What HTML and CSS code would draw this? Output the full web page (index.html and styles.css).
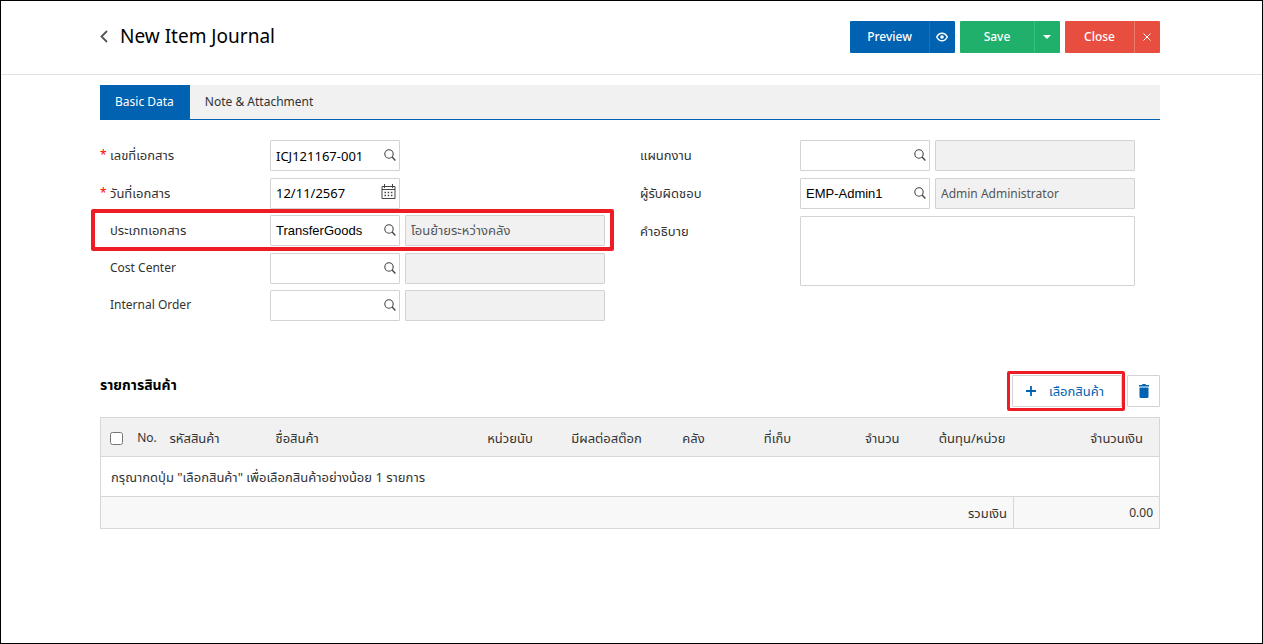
FILE: index.html
```html
<!DOCTYPE html>
<html lang="th">
<head>
<meta charset="utf-8">
<title>New Item Journal</title>
<meta name="viewport" content="width=device-width, initial-scale=1">
<link rel="stylesheet" href="styles.css">
</head>
<body>
<svg class="defs" aria-hidden="true">
  <symbol id="search" viewBox="0 0 12 12"><circle cx="5" cy="5" r="4.2" fill="none" stroke="currentColor" stroke-width="1.1"/><path d="M8.1 8.1 11.4 11.4" stroke="currentColor" stroke-width="1.4"/></symbol>
</svg>
<div class="page">
  <header class="header">
    <a class="back" href="#" aria-label="Back"><svg width="8" height="13" viewBox="0 0 8 13"><path d="M7 1 1.5 6.5 7 12" fill="none" stroke="currentColor" stroke-width="1.8"/></svg></a>
    <h1 class="title">New Item Journal</h1>
    <div class="actions">
      <div class="split split-blue">
        <button class="split-main" type="button">Preview</button>
        <button class="split-side" type="button" aria-label="Preview options"><svg width="12" height="10" viewBox="0 0 12 10"><path d="M.7 5C2 2.4 3.8 1.2 6 1.2S10 2.4 11.3 5C10 7.6 8.2 8.8 6 8.8S2 7.6 .7 5Z" fill="none" stroke="currentColor" stroke-width="1.4"/><circle cx="6" cy="5" r="1.8" fill="currentColor"/></svg></button>
      </div>
      <div class="split split-green">
        <button class="split-main" type="button">Save</button>
        <button class="split-side" type="button" aria-label="Save options"><svg width="8" height="4" viewBox="0 0 8 4"><path d="M0 0H8L4 4Z" fill="currentColor"/></svg></button>
      </div>
      <div class="split split-red">
        <button class="split-main" type="button">Close</button>
        <button class="split-side" type="button" aria-label="Close page"><svg width="8" height="8" viewBox="0 0 8 8"><path d="M.5.5 7.5 7.5M7.5.5.5 7.5" stroke="currentColor" stroke-width="1"/></svg></button>
      </div>
    </div>
  </header>
  <main class="main">
    <nav class="tabs">
      <a class="tab tab-active" href="#">Basic Data</a>
      <a class="tab" href="#">Note &amp; Attachment</a>
    </nav>
    <form class="form">
      <div class="form-col">
        <div class="row">
          <label class="label thai required" for="docno">เลขที่เอกสาร</label>
          <div class="lookup"><input class="field field-value" id="docno" value="ICJ121167-001"><svg class="field-icon"><use href="#search"/></svg></div>
        </div>
        <div class="row">
          <label class="label thai required" for="docdate">วันที่เอกสาร</label>
          <div class="lookup"><input class="field field-value" id="docdate" value="12/11/2567"><svg class="field-icon calendar" viewBox="0 0 15 15"><path d="M1 2.5H14V14.5H1ZM1 5.5H14M3.5 0V4M11.5 0V4" fill="none" stroke="currentColor"/><path d="M3.5 8.5H12M3.5 11.5H12" stroke="currentColor" stroke-width="1.5" stroke-dasharray="1.5 1.7"/></svg></div>
        </div>
        <div class="row marked marked-row">
          <label class="label thai" for="doctype">ประเภทเอกสาร</label>
          <div class="lookup"><input class="field field-code" id="doctype" value="TransferGoods"><svg class="field-icon"><use href="#search"/></svg></div>
          <input class="field field-read thai" aria-label="ชื่อประเภทเอกสาร" value="โอนย้ายระหว่างคลัง" readonly>
        </div>
        <div class="row">
          <label class="label" for="cost">Cost Center</label>
          <div class="lookup"><input class="field" id="cost"><svg class="field-icon"><use href="#search"/></svg></div>
          <input class="field field-read" aria-label="Cost Center name" readonly>
        </div>
        <div class="row">
          <label class="label" for="order">Internal Order</label>
          <div class="lookup"><input class="field" id="order"><svg class="field-icon"><use href="#search"/></svg></div>
          <input class="field field-read" aria-label="Internal Order name" readonly>
        </div>
      </div>
      <div class="form-col">
        <div class="row">
          <label class="label thai" for="job">แผนกงาน</label>
          <div class="lookup"><input class="field" id="job"><svg class="field-icon"><use href="#search"/></svg></div>
          <input class="field field-read" aria-label="ชื่อแผนกงาน" readonly>
        </div>
        <div class="row">
          <label class="label thai" for="owner">ผู้รับผิดชอบ</label>
          <div class="lookup"><input class="field field-code" id="owner" value="EMP-Admin1"><svg class="field-icon"><use href="#search"/></svg></div>
          <input class="field field-read" aria-label="ชื่อผู้รับผิดชอบ" value="Admin Administrator" readonly>
        </div>
        <div class="row">
          <label class="label thai" for="note">คำอธิบาย</label>
          <textarea class="field field-note" id="note"></textarea>
        </div>
      </div>
    </form>
    <section class="items">
      <div class="items-head">
        <h2 class="items-title">รายการสินค้า</h2>
        <div class="items-tools">
          <div class="marked marked-button">
            <button class="tool tool-add thai" type="button"><svg width="10" height="10" viewBox="0 0 10 10"><path d="M5 0V10M0 5H10" stroke="currentColor" stroke-width="1.8"/></svg>เลือกสินค้า</button>
          </div>
          <button class="tool tool-delete" type="button" aria-label="Delete"><svg width="12" height="14" viewBox="0 0 12 14"><path d="M1 1H4L4.5 0H7.5L8 1H11V2.5H1ZM1.5 3.5H10.5V12.5Q10.5 14 9 14H3Q1.5 14 1.5 12.5Z" fill="currentColor"/></svg></button>
        </div>
      </div>
      <table class="table">
        <colgroup><col class="c-check"><col class="c-no"><col class="c-code"><col><col class="c-unit"><col class="c-stock"><col class="c-store"><col class="c-bin"><col class="c-qty"><col class="c-cost"><col class="c-total"></colgroup>
        <thead>
          <tr>
            <th class="center"><input class="check" type="checkbox" aria-label="Select all"></th>
            <th class="center">No.</th>
            <th class="thai">รหัสสินค้า</th>
            <th class="thai">ชื่อสินค้า</th>
            <th class="thai center">หน่วยนับ</th>
            <th class="thai center">มีผลต่อสต๊อก</th>
            <th class="thai center">คลัง</th>
            <th class="thai center">ที่เก็บ</th>
            <th class="thai right">จำนวน</th>
            <th class="thai right">ต้นทุน/หน่วย</th>
            <th class="thai right wide">จำนวนเงิน</th>
          </tr>
        </thead>
        <tbody>
          <tr><td class="thai empty" colspan="11">กรุณากดปุ่ม "เลือกสินค้า" เพื่อเลือกสินค้าอย่างน้อย 1 รายการ</td></tr>
        </tbody>
        <tfoot>
          <tr><td class="thai right sum" colspan="10">รวมเงิน</td><td class="right sum sum-value">0.00</td></tr>
        </tfoot>
      </table>
    </section>
  </main>
</div>
</body>
</html>
```
FILE: styles.css
```css
* { box-sizing: border-box; }
body { margin: 0; background: #fff; color: #333; font: 12px/18px "Noto Sans", "Noto Sans Thai", sans-serif; }
button, input, textarea { font: inherit; color: inherit; }
.defs { position: absolute; width: 0; height: 0; }
.page { min-height: 100vh; border: 1px solid #000; }
.header { display: flex; align-items: center; padding: 0 102px 2px 99px; height: 74px; border-bottom: 1px solid #e1e1e1; }
.back { display: flex; width: 20px; color: #555; }
.title { flex: 1; margin: 0; padding-bottom: 2px; color: #000; font-size: 19px; line-height: 28px; font-weight: 400; }
.actions { display: flex; gap: 5px; }
.split { display: flex; height: 32px; color: #fff; border-radius: 1px; overflow: hidden; }
.split button { border: 0; background: none; padding: 0; display: flex; align-items: center; justify-content: center; }
.split .split-main { width: 79px; padding-top: 1px; font-weight: 500; }
.split .split-side { width: 26px; padding-right: 2px; border-left: 1px solid; }
.split-blue { background: #0062b1; }
.split-blue .split-side { border-color: #1373c4; }
.split-green { background: #20b06c; }
.split-green .split-main { width: 74px; }
.split-green .split-side { border-color: #2bc77e; }
.split-red { background: #e84e40; }
.split-red .split-main { width: 69px; }
.split-red .split-side { border-color: #ee7669; }
.main { padding: 10px 102px 0 99px; }
.tabs { display: flex; background: #f1f1f1; border-bottom: 1px solid #0062b1; }
.tab { padding: 8px 16px 8px 15px; color: #333; text-decoration: none; }
.tab-active { background: #0062b1; color: #fff; }
.form { display: grid; grid-template-columns: 1fr 1fr; padding-top: 20px; }
.form-col { display: grid; align-content: space-between; justify-items: start; min-height: 181px; }
.form-col + .form-col { align-content: start; row-gap: 7px; }
.row { display: grid; grid-template-columns: 155px 130px 200px; column-gap: 5px; align-items: start; margin-left: 10px; }
.label { position: relative; padding-top: 6px; }
.thai { font-size: 13px; }
.required::before { content: "*"; position: absolute; left: -10px; color: #f00; font-size: 12px; }
.lookup { position: relative; }
.field { display: block; width: 100%; height: 31px; padding: 0 5px; border: 1px solid #d3d3d3; border-radius: 1px; background: #fff; color: #000; }
.field-value { font-size: 13px; }
.field-code { font-family: "Liberation Sans", sans-serif; font-size: 13px; }
.field-read { background: #f1f1f1; color: #555; }
.field-note { grid-column: 2 / 4; height: 70px; resize: none; }
.field-icon { position: absolute; right: 4px; top: 9px; width: 12px; height: 12px; color: #444; }
.field-icon.calendar { right: 4px; top: 6px; width: 15px; height: 15px; }
.marked { position: relative; }
.marked::after { content: ""; position: absolute; border: 4px solid #ee1c25; border-radius: 2px; pointer-events: none; }
.marked-row::after { inset: -6px -9px -5px -19px; }
.marked-button::after { inset: -4px -3px -4px -5px; border-width: 3px; }
.items { padding-top: 54px; }
.items-head { display: flex; justify-content: space-between; padding-bottom: 10px; }
.items-title { margin: 0; color: #000; font-size: 14px; line-height: 20px; font-weight: 700; }
.items-tools { display: flex; gap: 5px; }
.tool { display: flex; align-items: center; justify-content: center; height: 32px; border: 1px solid #d3d3d3; border-radius: 1px; background: #fff; color: #0062b1; padding: 0; }
.tool-add { width: 110px; gap: 13px; padding-right: 4px; }
.tool-delete { width: 33px; }
.table { width: 100%; table-layout: fixed; border-collapse: collapse; border: 1px solid #d7d7d7; }
.c-check { width: 32px; } .c-no { width: 29px; } .c-code { width: 106px; } .c-unit { width: 95px; }
.c-stock { width: 98px; } .c-store { width: 76px; } .c-bin { width: 92px; } .c-qty { width: 84px; }
.c-cost { width: 106px; } .c-total { width: 146px; }
.table th { height: 39px; padding: 1px 8px 0; background: #f1f1f1; font-weight: 400; text-align: left; white-space: nowrap; }
.table td { border-top: 1px solid #d7d7d7; }
.table .center { text-align: center; padding: 1px 0 0; }
.table .right { text-align: right; }
.table .wide { padding-right: 16px; }
.table .empty { height: 40px; padding: 0 10px; }
.table .sum { height: 32px; padding: 0 6px; background: #f8f8f8; }
.table .sum-value { border-left: 1px solid #d7d7d7; }
.check { display: block; width: 13px; height: 13px; margin: 2px auto 0; }
```
